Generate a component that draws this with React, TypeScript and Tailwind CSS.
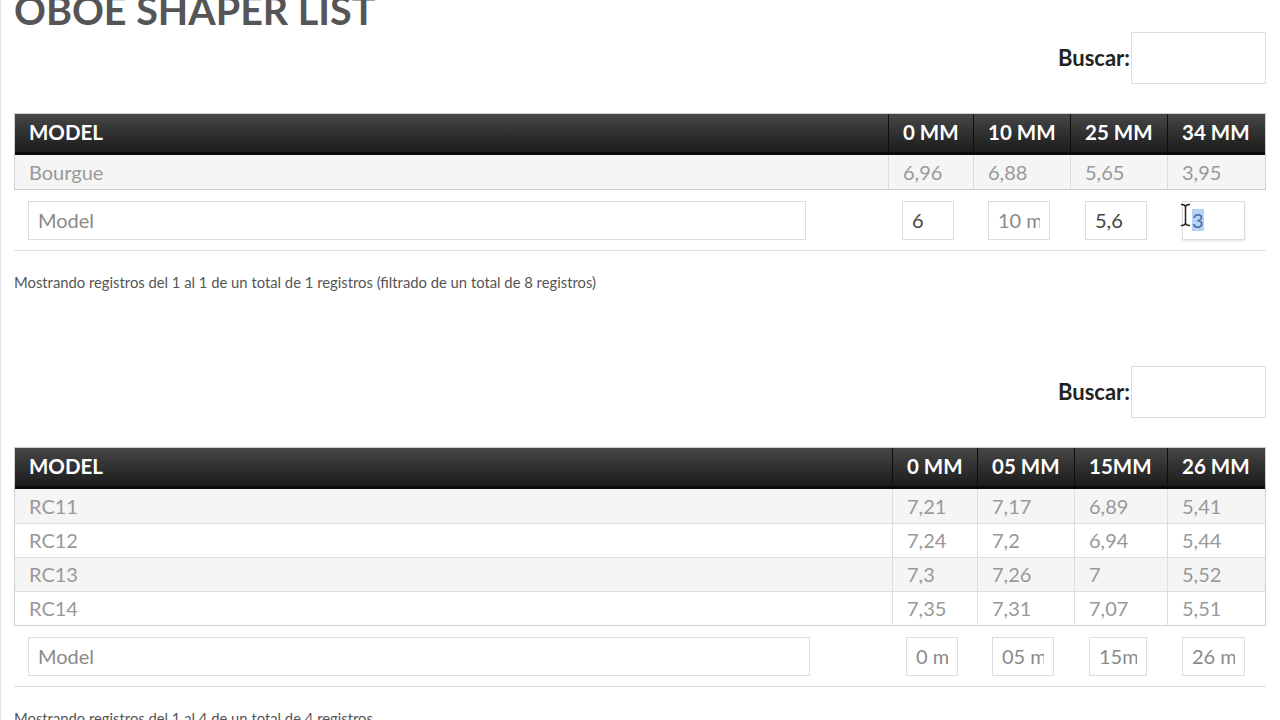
import React from 'react';

type Filter = { w: number; value?: string; ph: string; selected?: boolean };

type Block = {
  cols: string[];
  widths: number[];
  rows: string[][];
  filters: Filter[];
  info: string;
};

const blocks: Block[] = [
  {
    cols: ['0 MM', '10 MM', '25 MM', '34 MM'],
    widths: [85, 97, 97, 98],
    rows: [['Bourgue', '6,96', '6,88', '5,65', '3,95']],
    filters: [
      { w: 778, ph: 'Model' },
      { w: 52, value: '6', ph: '0 mm' },
      { w: 62, ph: '10 mm' },
      { w: 62, value: '5,6', ph: '25 mm' },
      { w: 63, value: '3', ph: '34 mm', selected: true },
    ],
    info: 'Mostrando registros del 1 al 1 de un total de 1 registros (filtrado de un total de 8 registros)',
  },
  {
    cols: ['0 MM', '05 MM', '15MM', '26 MM'],
    widths: [85, 97, 93, 98],
    rows: [
      ['RC11', '7,21', '7,17', '6,89', '5,41'],
      ['RC12', '7,24', '7,2', '6,94', '5,44'],
      ['RC13', '7,3', '7,26', '7', '5,52'],
      ['RC14', '7,35', '7,31', '7,07', '5,51'],
    ],
    filters: [
      { w: 782, ph: 'Model' },
      { w: 52, ph: '0 mm' },
      { w: 62, ph: '05 mm' },
      { w: 58, ph: '15mm' },
      { w: 63, ph: '26 mm' },
    ],
    info: 'Mostrando registros del 1 al 4 de un total de 4 registros',
  },
];

function FilterInput({ f }: { f: Filter }) {
  if (f.selected) {
    return (
      <div
        className="h-[39px] border border-[#ddd] bg-white pl-[9px] flex items-center text-[20px] text-[#555] shadow-[0_1px_2px_rgba(0,0,0,0.12)]"
        style={{ width: f.w }}
      >
        <span className="bg-[#b4d3f6] text-[#4b6fa3] leading-[22px]">{f.value}</span>
      </div>
    );
  }
  return (
    <input
      readOnly
      defaultValue={f.value}
      placeholder={f.ph}
      className="h-[39px] border border-[#ddd] bg-white px-[9px] text-[20px] text-[#444] placeholder:text-[#8a8a8a] outline-none"
      style={{ width: f.w }}
    />
  );
}

function IBeam() {
  return (
    <svg
      className="absolute left-[12px] top-[2px]"
      width="11"
      height="24"
      viewBox="0 0 11 24"
      fill="none"
    >
      <path
        d="M1.5 1.5 Q5.5 1.5 5.5 4.5 Q5.5 1.5 9.5 1.5 M5.5 4.5 V19.5 M1.5 22.5 Q5.5 22.5 5.5 19.5 Q5.5 22.5 9.5 22.5"
        stroke="#222"
        strokeWidth="1.5"
        strokeLinecap="round"
      />
    </svg>
  );
}

function ShaperBlock({ block }: { block: Block }) {
  return (
    <div>
      {/* Search */}
      <div className="flex justify-end items-center">
        <span className="text-[22px] font-bold text-[#222] mr-[1px]">Buscar:</span>
        <input readOnly className="w-[135px] h-[52px] border border-[#ddd] bg-white outline-none" />
      </div>

      {/* Table */}
      <div className="mt-[29px] border border-[#cfcfcf]">
        <div className="flex h-[41px] bg-linear-to-b from-[#474747] to-[#1c1c1c] border-b-[3px] border-[#0c0c0c] text-white text-[20.5px] font-bold">
          <div className="flex-1 flex items-center pl-[14px]">MODEL</div>
          {block.cols.map((c, i) => (
            <div
              key={c}
              className="flex items-center pl-[14px] border-l border-[#0f0f0f]"
              style={{ width: block.widths[i] }}
            >
              {c}
            </div>
          ))}
        </div>
        {block.rows.map((r, ri) => (
          <div
            key={r[0]}
            className={`flex h-[34px] text-[20px] text-[#999] ${ri % 2 === 0 ? 'bg-[#f5f5f5]' : 'bg-white'} ${
              ri > 0 ? 'border-t border-[#dedede]' : ''
            }`}
          >
            <div className="flex-1 flex items-center pl-[14px]">{r[0]}</div>
            {r.slice(1).map((v, i) => (
              <div
                key={i}
                className="flex items-center pl-[14px] border-l border-[#dedede]"
                style={{ width: block.widths[i] }}
              >
                {v}
              </div>
            ))}
          </div>
        ))}
      </div>

      {/* Column filters */}
      <div className="flex h-[61px] pt-[11px] border-b border-[#dcdcdc]">
        <div className="flex-1 pl-[14px]">
          <FilterInput f={block.filters[0]} />
        </div>
        {block.filters.slice(1).map((f, i) => (
          <div key={i} className="relative pl-[14px]" style={{ width: block.widths[i] + (i === 0 ? 1 : 0) }}>
            <FilterInput f={f} />
            {f.selected && <IBeam />}
          </div>
        ))}
      </div>

      <p className="mt-[21px] mb-[74px] text-[14.8px] leading-[20px] text-[#555]">{block.info}</p>
    </div>
  );
}

export default function App() {
  return (
    <div className="min-h-screen bg-white border-l border-[#e4e4e4] font-['Lato','Noto_Sans',sans-serif] overflow-hidden">
      <div className="pl-[13px] pr-[14px]">
        <h1 className="mt-[-10px] text-[39.5px] leading-none font-bold uppercase text-[#555]">Oboe Shaper List</h1>
        <div className="mt-[2px]">
          {blocks.map((b, i) => (
            <ShaperBlock key={i} block={b} />
          ))}
        </div>
      </div>
    </div>
  );
}
